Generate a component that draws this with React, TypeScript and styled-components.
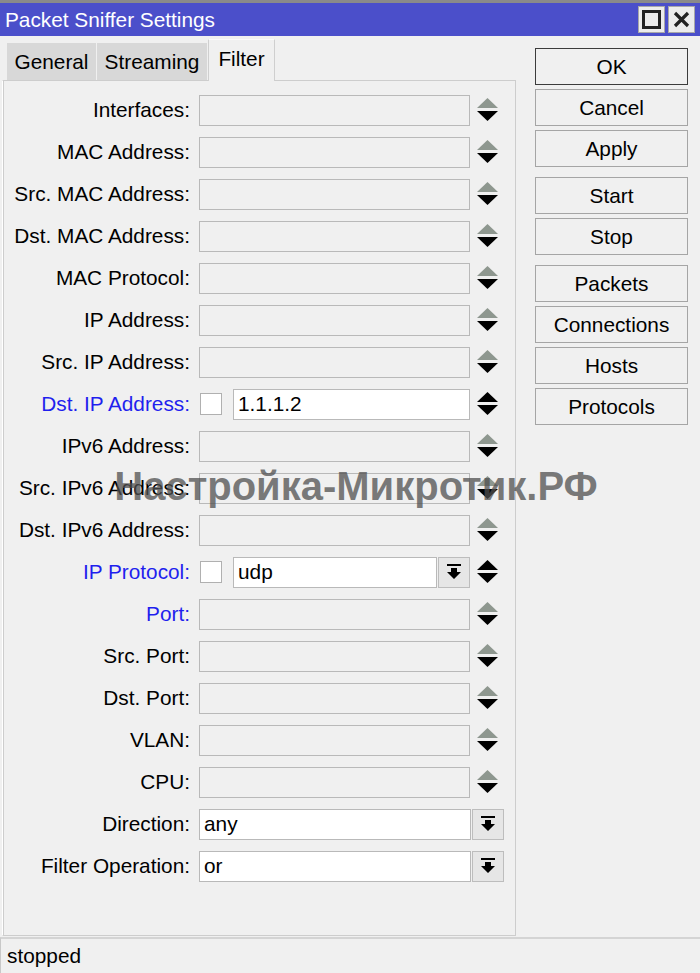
import React from "react";
import styled, { createGlobalStyle } from "styled-components";

const GlobalStyle = createGlobalStyle`
  html, body {
    margin: 0;
    padding: 0;
    background: #f0f0f0;
  }
  body {
    font-family: "Liberation Sans", Arial, sans-serif;
    font-size: 20.8px;
    color: #000;
  }
`;

const StyledWindow = styled.div`
  position: relative;
  width: 700px;
  height: 973px;
  display: flex;
  flex-direction: column;
  background: #f0f0f0;
  border-top: 3px solid #8a8a8a;
  box-sizing: border-box;
  overflow: hidden;
`;

const StyledTitleBar = styled.div`
  height: 33px;
  flex: 0 0 33px;
  background: #4b4fca;
  display: flex;
  align-items: center;
  justify-content: space-between;
  padding: 0 5px 0 5px;
  color: #fff;
`;

const StyledTitleButtons = styled.div`
  display: flex;
  gap: 3px;
`;

const StyledTitleButton = styled.div`
  width: 27px;
  height: 27px;
  box-sizing: border-box;
  background: #ececec;
  border: 1px solid #a8a8a8;
  display: flex;
  align-items: center;
  justify-content: center;
`;

const StyledBody = styled.div`
  flex: 1;
  display: flex;
  min-height: 0;
`;

const StyledLeft = styled.div`
  width: 514px;
  margin-left: 2px;
  display: flex;
  flex-direction: column;
`;

const StyledTabs = styled.div`
  height: 44px;
  flex: 0 0 44px;
  display: flex;
  align-items: flex-end;
  padding-left: 5px;
  gap: 1px;
`;

const StyledTab = styled.div<{ active?: boolean; w: number }>`
  box-sizing: border-box;
  height: ${(p) => (p.active ? "42px" : "37px")};
  padding: ${(p) => (p.active ? "0 0 4px" : "0")};
  background: ${(p) => (p.active ? "#f0f0f0" : "#d8d8d8")};
  border: ${(p) => (p.active ? "1px solid #cfcfcf" : "none")};
  border-bottom: none;
  border-top-color: ${(p) => (p.active ? "#fafafa" : "transparent")};
  display: flex;
  align-items: center;
  justify-content: center;
  width: ${(p) => p.w}px;
  margin-bottom: ${(p) => (p.active ? "-1px" : "0")};
  position: relative;
  z-index: 1;
`;

const StyledPanel = styled.div`
  flex: 1;
  border: 1px solid #cdcdcd;
  border-left-color: #ffffff;
  box-shadow: inset 1px 0 0 #cdcdcd;
  padding-top: 8px;
  display: flex;
  flex-direction: column;
`;

const StyledRow = styled.div`
  height: 42px;
  display: flex;
  align-items: center;
`;

const StyledLabel = styled.div<{ blue?: boolean }>`
  width: 187px;
  text-align: right;
  padding-right: 9px;
  color: ${(p) => (p.blue ? "#1f1fee" : "#000")};
  white-space: nowrap;
`;

const StyledControls = styled.div`
  display: flex;
  align-items: center;
`;

const StyledField = styled.div<{ enabled?: boolean; w: number }>`
  box-sizing: border-box;
  width: ${(p) => p.w}px;
  height: 31px;
  border: 1px solid #b9b9b9;
  background: ${(p) => (p.enabled ? "#fff" : "#f0f0f0")};
  display: flex;
  align-items: center;
  padding-left: 4px;
`;

const StyledCheck = styled.div`
  box-sizing: border-box;
  width: 22px;
  height: 22px;
  border: 1px solid #b0b0b0;
  background: #fff;
  margin-left: 1px;
  margin-right: 11px;
`;

const StyledDropButton = styled.div<{ gap: number }>`
  box-sizing: border-box;
  width: 32px;
  height: 31px;
  margin-left: ${(p) => p.gap}px;
  border: 1px solid #bdbdbd;
  background: #e6e6e6;
  display: flex;
  align-items: center;
  justify-content: center;
`;

const StyledSpin = styled.div`
  margin-left: 7px;
  width: 21px;
  height: 24px;
  display: flex;
`;

const StyledRight = styled.div`
  padding: 12px 0 0 19px;
  display: flex;
  flex-direction: column;
`;

const StyledGroup = styled.div`
  display: flex;
  flex-direction: column;
  gap: 4px;
  margin-bottom: 10px;
`;

const StyledButton = styled.div<{ primary?: boolean }>`
  box-sizing: border-box;
  width: 153px;
  height: 37px;
  background: #f0f0f0;
  border: 1px solid ${(p) => (p.primary ? "#3c3c3c" : "#a5a5a5")};
  display: flex;
  align-items: center;
  justify-content: center;
`;

const StyledStatus = styled.div`
  height: 34px;
  flex: 0 0 34px;
  border-top: 2px solid #d4d4d4;
  margin-top: 1px;
  display: flex;
  align-items: center;
  padding-left: 6px;
  border-left: 1px solid #c8c8c8;
`;

const StyledWatermark = styled.div`
  position: absolute;
  left: 0;
  right: 0;
  top: 461px;
  text-align: center;
  padding-left: 12px;
  font-family: "Liberation Sans", Arial, sans-serif;
  font-weight: bold;
  font-size: 40px;
  color: rgba(80, 80, 80, 0.75);
  pointer-events: none;
  white-space: nowrap;
`;

const Spin = ({ enabled }: { enabled?: boolean }) => (
  <StyledSpin>
    <svg width="21" height="24" viewBox="0 0 21 24">
      <polygon points="10.5,0 21,10 0,10" fill={enabled ? "#000" : "#8e978f"} />
      <polygon points="0,13 21,13 10.5,23" fill="#000" />
    </svg>
  </StyledSpin>
);

const DropIcon = () => (
  <svg width="16" height="16" viewBox="0 0 16 16">
    <rect x="1" y="0" width="14" height="2" fill="#000" />
    <polygon points="5,4 11,4 11,8 15,8 8,15 1,8 5,8" fill="#000" />
  </svg>
);

type Row = {
  label: string;
  kind?: "check" | "checkCombo" | "combo";
  value?: string;
  blue?: boolean;
};

const rows: Row[] = [
  { label: "Interfaces:" },
  { label: "MAC Address:" },
  { label: "Src. MAC Address:" },
  { label: "Dst. MAC Address:" },
  { label: "MAC Protocol:" },
  { label: "IP Address:" },
  { label: "Src. IP Address:" },
  { label: "Dst. IP Address:", kind: "check", value: "1.1.1.2", blue: true },
  { label: "IPv6 Address:" },
  { label: "Src. IPv6 Address:" },
  { label: "Dst. IPv6 Address:" },
  { label: "IP Protocol:", kind: "checkCombo", value: "udp", blue: true },
  { label: "Port:", blue: true },
  { label: "Src. Port:" },
  { label: "Dst. Port:" },
  { label: "VLAN:" },
  { label: "CPU:" },
  { label: "Direction:", kind: "combo", value: "any" },
  { label: "Filter Operation:", kind: "combo", value: "or" },
];

const buttonGroups = [
  ["OK", "Cancel", "Apply"],
  ["Start", "Stop"],
  ["Packets", "Connections", "Hosts", "Protocols"],
];

const renderControls = (row: Row) => {
  if (row.kind === "check") {
    return (
      <>
        <StyledCheck />
        <StyledField enabled w={237}>{row.value}</StyledField>
        <Spin enabled />
      </>
    );
  }
  if (row.kind === "checkCombo") {
    return (
      <>
        <StyledCheck />
        <StyledField enabled w={204}>{row.value}</StyledField>
        <StyledDropButton gap={1}>
          <DropIcon />
        </StyledDropButton>
        <Spin enabled />
      </>
    );
  }
  if (row.kind === "combo") {
    return (
      <>
        <StyledField enabled w={272}>{row.value}</StyledField>
        <StyledDropButton gap={1}>
          <DropIcon />
        </StyledDropButton>
      </>
    );
  }
  return (
    <>
      <StyledField w={271} />
      <Spin />
    </>
  );
};

export default function App() {
  return (
    <StyledWindow>
      <GlobalStyle />
      <StyledTitleBar>
        <span>Packet Sniffer Settings</span>
        <StyledTitleButtons>
          <StyledTitleButton>
            <svg width="19" height="19" viewBox="0 0 19 19">
              <rect x="1.5" y="1.5" width="16" height="16" fill="none" stroke="#222" strokeWidth="3" />
            </svg>
          </StyledTitleButton>
          <StyledTitleButton>
            <svg width="17" height="17" viewBox="0 0 17 17">
              <path d="M2 2 L15 15 M15 2 L2 15" stroke="#222" strokeWidth="3.2" />
            </svg>
          </StyledTitleButton>
        </StyledTitleButtons>
      </StyledTitleBar>
      <StyledBody>
        <StyledLeft>
          <StyledTabs>
            <StyledTab w={89}>General</StyledTab>
            <StyledTab w={110}>Streaming</StyledTab>
            <StyledTab w={67} active>
              Filter
            </StyledTab>
          </StyledTabs>
          <StyledPanel>
            {rows.map((row) => (
              <StyledRow key={row.label}>
                <StyledLabel blue={row.blue}>{row.label}</StyledLabel>
                <StyledControls>{renderControls(row)}</StyledControls>
              </StyledRow>
            ))}
          </StyledPanel>
        </StyledLeft>
        <StyledRight>
          {buttonGroups.map((group, i) => (
            <StyledGroup key={i}>
              {group.map((b) => (
                <StyledButton key={b} primary={b === "OK"}>
                  {b}
                </StyledButton>
              ))}
            </StyledGroup>
          ))}
        </StyledRight>
      </StyledBody>
      <StyledStatus>stopped</StyledStatus>
      <StyledWatermark>Настройка-Микротик.РФ</StyledWatermark>
    </StyledWindow>
  );
}
